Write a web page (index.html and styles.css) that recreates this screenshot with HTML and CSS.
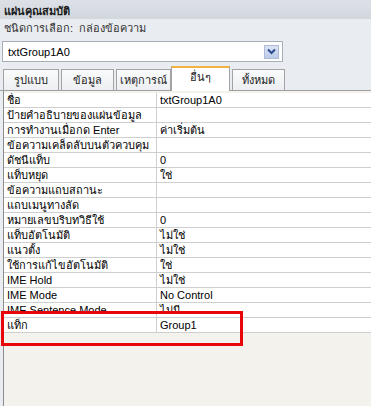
FILE: index.html
```html
<html>
<head>
<link rel="stylesheet" href="styles.css">
</head>
<body>
<div id="sheet">
<div class="title">แผ่นคุณสมบัติ</div>
<div class="kind">ชนิดการเลือก:&nbsp; กล่องข้อความ</div>
<div class="combo">
<span class="combo-text">txtGroup1A0</span>
<span class="combo-btn">
<svg width="9" height="7" viewBox="0 0 9 7"><path d="M1 1.5 L4.5 5 L8 1.5" fill="none" stroke="#2c4a8c" stroke-width="2"/></svg>
</span>
</div>
<div class="tabs">
<div class="tab t1">รูปแบบ</div>
<div class="tab t2">ข้อมูล</div>
<div class="tab t3">เหตุการณ์</div>
<div class="tab active">อื่นๆ</div>
<div class="tab t5">ทั้งหมด</div>
</div>
<div class="grid">
<div class="row"><span class="name">ชื่อ</span><span class="val">txtGroup1A0</span></div>
<div class="row"><span class="name">ป้ายคำอธิบายของแผ่นข้อมูล</span><span class="val"></span></div>
<div class="row"><span class="name">การทำงานเมื่อกด Enter</span><span class="val">ค่าเริ่มต้น</span></div>
<div class="row"><span class="name">ข้อความเคล็ดลับบนตัวควบคุม</span><span class="val"></span></div>
<div class="row"><span class="name">ดัชนีแท็บ</span><span class="val">0</span></div>
<div class="row"><span class="name">แท็บหยุด</span><span class="val">ใช่</span></div>
<div class="row"><span class="name">ข้อความแถบสถานะ</span><span class="val"></span></div>
<div class="row"><span class="name">แถบเมนูทางลัด</span><span class="val"></span></div>
<div class="row"><span class="name">หมายเลขบริบทวิธีใช้</span><span class="val">0</span></div>
<div class="row"><span class="name">แท็บอัตโนมัติ</span><span class="val">ไม่ใช่</span></div>
<div class="row"><span class="name">แนวตั้ง</span><span class="val">ไม่ใช่</span></div>
<div class="row"><span class="name">ใช้การแก้ไขอัตโนมัติ</span><span class="val">ใช่</span></div>
<div class="row"><span class="name">IME Hold</span><span class="val">ไม่ใช่</span></div>
<div class="row"><span class="name">IME Mode</span><span class="val">No Control</span></div>
<div class="row"><span class="name">IME Sentence Mode</span><span class="val">ไม่มี</span></div>
<div class="row"><span class="name">แท็ก</span><span class="val">Group1</span></div>
<div class="mark"></div>
</div>
</div>
</body>
</html>
```

FILE: styles.css
```css
body {
margin: 0;
background: #e9ecf0;
font-family: "Liberation Sans", "Noto Sans", sans-serif;
font-size: 11px;
color: #000;
}

#sheet {
display: flex;
flex-direction: column;
height: 406px;
overflow: hidden;
}

.title {
height: 19px;
line-height: 22px;
padding-left: 4px;
font-weight: bold;
background: linear-gradient(#dde1e7, #d2d7de);
color: #1a1a1a;
}

.kind {
height: 22px;
line-height: 18px;
padding-left: 4px;
color: #333;
}

.combo {
display: flex;
align-items: center;
justify-content: space-between;
width: 279px;
height: 19px;
margin-left: 2px;
background: #fff;
border: 1px solid #a7aeb8;
}

.combo-text {
padding-left: 5px;
padding-top: 1px;
}

.combo-btn {
display: flex;
align-items: center;
justify-content: center;
width: 13px;
height: 12px;
margin-right: 3px;
background: linear-gradient(#dbe4f4, #bccbea);
border: 1px solid #aebbd8;
}

.tabs {
display: flex;
align-items: flex-end;
height: 25px;
margin-top: 3px;
padding-left: 3px;
border-bottom: 1px solid #a0a0a0;
}

.tab {
height: 20px;
line-height: 21px;
text-align: center;
background: linear-gradient(#fafbfc, #eceef1);
border: 1px solid #a3a3a3;
border-bottom: none;
margin-right: 2px;
color: #222;
}

.t1 { width: 54px; }
.t2 { width: 51px; }
.t3 { width: 53px; margin-right: 0; }
.t5 { width: 51px; }

.tab.active {
width: 57px;
height: 23px;
line-height: 19px;
background: #fff;
border-top: 2px solid #f3b340;
margin-bottom: -1px;
}

.grid {
position: relative;
flex: 1;
margin-left: 3px;
padding-top: 2px;
background: #f3f2ed;
border-left: 1px solid #8d8d8d;
}

.row {
display: grid;
grid-template-columns: 153px 1fr;
height: 14px;
line-height: 15px;
background: #fff;
border-bottom: 1px solid #cfcfcf;
}

.name {
padding-left: 3px;
border-right: 1px solid #cfcfcf;
white-space: nowrap;
overflow: hidden;
}

.val {
padding-left: 3px;
}

.mark {
position: absolute;
left: -3px;
top: 220px;
width: 236px;
height: 29px;
border: 3px solid #e8060a;
}
```
